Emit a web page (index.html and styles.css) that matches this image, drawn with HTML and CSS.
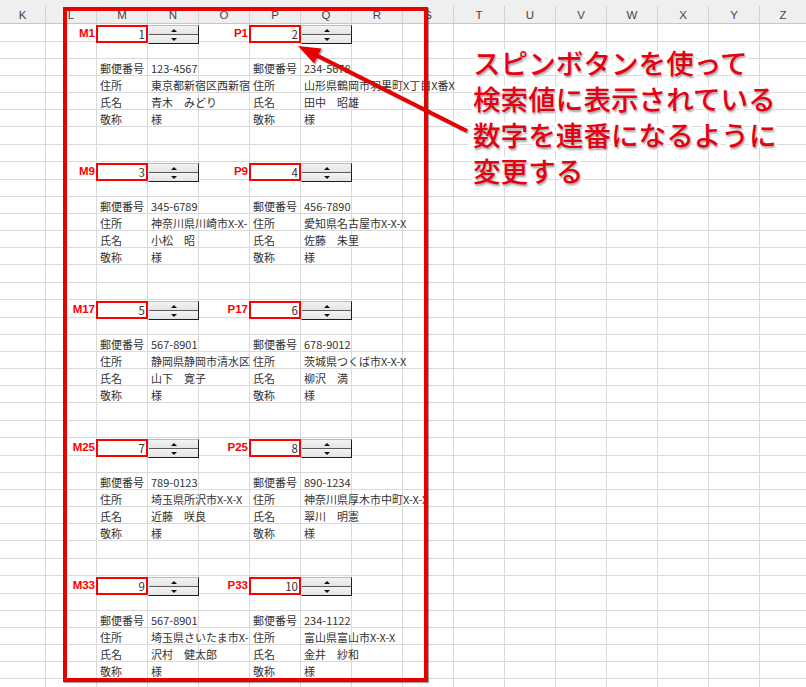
FILE: index.html
```html
<!DOCTYPE html>
<html lang="ja">
<head>
<meta charset="utf-8">
<title>スピンボタン</title>
<link rel="stylesheet" href="styles.css">
</head>
<body>
<div class="sheet">
  <div class="colhead">
    <div class="ch">K</div><div class="ch">L</div><div class="ch">M</div><div class="ch">N</div>
    <div class="ch">O</div><div class="ch">P</div><div class="ch">Q</div><div class="ch">R</div>
    <div class="ch">S</div><div class="ch">T</div><div class="ch">U</div><div class="ch">V</div>
    <div class="ch">W</div><div class="ch">X</div><div class="ch">Y</div><div class="ch">Z</div>
  </div>
  <div class="rows">
    <div class="block">
      <div class="key key-l">M1</div>
      <div class="box box-l">1</div>
      <div class="spin spin-l"><span class="half"><i class="up"></i></span><span class="half"><i class="dn"></i></span></div>
      <div class="key key-r">P1</div>
      <div class="box box-r">2</div>
      <div class="spin spin-r"><span class="half"><i class="up"></i></span><span class="half"><i class="dn"></i></span></div>
      <div class="lbl lbl-l r3">郵便番号</div><div class="val val-l r3">123-4567</div>
      <div class="lbl lbl-l r4">住所</div><div class="val val-l r4">東京都新宿区西新宿</div>
      <div class="lbl lbl-l r5">氏名</div><div class="val val-l r5">青木　みどり</div>
      <div class="lbl lbl-l r6">敬称</div><div class="val val-l r6">様</div>
      <div class="lbl lbl-r r3">郵便番号</div><div class="val val-r r3">234-5678</div>
      <div class="lbl lbl-r r4">住所</div><div class="val val-r r4">山形県鶴岡市羽黒町X丁目X番X</div>
      <div class="lbl lbl-r r5">氏名</div><div class="val val-r r5">田中　昭雄</div>
      <div class="lbl lbl-r r6">敬称</div><div class="val val-r r6">様</div>
    </div>
    <div class="block">
      <div class="key key-l">M9</div>
      <div class="box box-l">3</div>
      <div class="spin spin-l"><span class="half"><i class="up"></i></span><span class="half"><i class="dn"></i></span></div>
      <div class="key key-r">P9</div>
      <div class="box box-r">4</div>
      <div class="spin spin-r"><span class="half"><i class="up"></i></span><span class="half"><i class="dn"></i></span></div>
      <div class="lbl lbl-l r3">郵便番号</div><div class="val val-l r3">345-6789</div>
      <div class="lbl lbl-l r4">住所</div><div class="val val-l r4">神奈川県川崎市X-X-</div>
      <div class="lbl lbl-l r5">氏名</div><div class="val val-l r5">小松　昭</div>
      <div class="lbl lbl-l r6">敬称</div><div class="val val-l r6">様</div>
      <div class="lbl lbl-r r3">郵便番号</div><div class="val val-r r3">456-7890</div>
      <div class="lbl lbl-r r4">住所</div><div class="val val-r r4">愛知県名古屋市X-X-X</div>
      <div class="lbl lbl-r r5">氏名</div><div class="val val-r r5">佐藤　朱里</div>
      <div class="lbl lbl-r r6">敬称</div><div class="val val-r r6">様</div>
    </div>
    <div class="block">
      <div class="key key-l">M17</div>
      <div class="box box-l">5</div>
      <div class="spin spin-l"><span class="half"><i class="up"></i></span><span class="half"><i class="dn"></i></span></div>
      <div class="key key-r">P17</div>
      <div class="box box-r">6</div>
      <div class="spin spin-r"><span class="half"><i class="up"></i></span><span class="half"><i class="dn"></i></span></div>
      <div class="lbl lbl-l r3">郵便番号</div><div class="val val-l r3">567-8901</div>
      <div class="lbl lbl-l r4">住所</div><div class="val val-l r4">静岡県静岡市清水区</div>
      <div class="lbl lbl-l r5">氏名</div><div class="val val-l r5">山下　寛子</div>
      <div class="lbl lbl-l r6">敬称</div><div class="val val-l r6">様</div>
      <div class="lbl lbl-r r3">郵便番号</div><div class="val val-r r3">678-9012</div>
      <div class="lbl lbl-r r4">住所</div><div class="val val-r r4">茨城県つくば市X-X-X</div>
      <div class="lbl lbl-r r5">氏名</div><div class="val val-r r5">柳沢　満</div>
      <div class="lbl lbl-r r6">敬称</div><div class="val val-r r6">様</div>
    </div>
    <div class="block">
      <div class="key key-l">M25</div>
      <div class="box box-l">7</div>
      <div class="spin spin-l"><span class="half"><i class="up"></i></span><span class="half"><i class="dn"></i></span></div>
      <div class="key key-r">P25</div>
      <div class="box box-r">8</div>
      <div class="spin spin-r"><span class="half"><i class="up"></i></span><span class="half"><i class="dn"></i></span></div>
      <div class="lbl lbl-l r3">郵便番号</div><div class="val val-l r3">789-0123</div>
      <div class="lbl lbl-l r4">住所</div><div class="val val-l r4">埼玉県所沢市X-X-X</div>
      <div class="lbl lbl-l r5">氏名</div><div class="val val-l r5">近藤　咲良</div>
      <div class="lbl lbl-l r6">敬称</div><div class="val val-l r6">様</div>
      <div class="lbl lbl-r r3">郵便番号</div><div class="val val-r r3">890-1234</div>
      <div class="lbl lbl-r r4">住所</div><div class="val val-r r4">神奈川県厚木市中町X-X-X</div>
      <div class="lbl lbl-r r5">氏名</div><div class="val val-r r5">翠川　明憲</div>
      <div class="lbl lbl-r r6">敬称</div><div class="val val-r r6">様</div>
    </div>
    <div class="block">
      <div class="key key-l">M33</div>
      <div class="box box-l">9</div>
      <div class="spin spin-l"><span class="half"><i class="up"></i></span><span class="half"><i class="dn"></i></span></div>
      <div class="key key-r">P33</div>
      <div class="box box-r">10</div>
      <div class="spin spin-r"><span class="half"><i class="up"></i></span><span class="half"><i class="dn"></i></span></div>
      <div class="lbl lbl-l r3">郵便番号</div><div class="val val-l r3">567-8901</div>
      <div class="lbl lbl-l r4">住所</div><div class="val val-l r4">埼玉県さいたま市X-</div>
      <div class="lbl lbl-l r5">氏名</div><div class="val val-l r5">沢村　健太郎</div>
      <div class="lbl lbl-l r6">敬称</div><div class="val val-l r6">様</div>
      <div class="lbl lbl-r r3">郵便番号</div><div class="val val-r r3">234-1122</div>
      <div class="lbl lbl-r r4">住所</div><div class="val val-r r4">富山県富山市X-X-X</div>
      <div class="lbl lbl-r r5">氏名</div><div class="val val-r r5">金井　紗和</div>
      <div class="lbl lbl-r r6">敬称</div><div class="val val-r r6">様</div>
    </div>
  </div>

  <div class="frame"></div>

  <svg class="arrow" width="806" height="687" viewBox="0 0 806 687">
    <g class="arrow-shadow" transform="translate(1.5 1.5)">
      <line x1="467" y1="131" x2="316" y2="55" stroke-width="4"/>
      <polygon points="298,46 321.5,48.5 314,63.5"/>
    </g>
    <g class="arrow-main">
      <line x1="467" y1="131" x2="316" y2="55" stroke-width="4"/>
      <polygon points="298,46 321.5,48.5 314,63.5"/>
    </g>
  </svg>

  <div class="note">
    <div>スピンボタンを使って</div>
    <div>検索値に表示されている</div>
    <div>数字を連番になるように</div>
    <div>変更する</div>
  </div>
</div>
</body>
</html>
```

FILE: styles.css
```css
html, body {
  margin: 0;
  padding: 0;
  background: #fff;
}

.sheet {
  position: relative;
  width: 806px;
  height: 687px;
  overflow: hidden;
  font-family: "Noto Sans CJK JP", "Noto Sans", sans-serif;
  font-size: 11px;
  color: #333;
}

.colhead {
  display: grid;
  grid-template-columns: 46px repeat(14, 51px) 46px;
  height: 24px;
  background: #efefef;
  border-bottom: 1px solid #c6c6c6;
  box-sizing: border-box;
}

.ch {
  border-right: 1px solid #d2d2d2;
  text-align: center;
  font-family: "Liberation Sans", Arial, sans-serif;
  font-size: 11.5px;
  color: #444;
  box-sizing: border-box;
  margin-top: 6px;
  line-height: 16px;
  padding-top: 1px;
}

.ch:last-child {
  border-right: 0;
}

.rows {
  display: flex;
  flex-direction: column;
  background-image: linear-gradient(to right, transparent 50px, #dadada 50px);
  background-size: 51px 100%;
  background-position: 46px 0;
  background-repeat: repeat-x;
}

.block {
  display: grid;
  grid-template-columns: 46px repeat(14, 51px) 46px;
  grid-template-rows: 18px 17px 17px 17px 17px 17px 18px 17px;
  background-image: linear-gradient(to bottom,
    transparent 17px, #dadada 17px 18px,
    transparent 18px 34px, #dadada 34px 35px,
    transparent 35px 51px, #dadada 51px 52px,
    transparent 52px 68px, #dadada 68px 69px,
    transparent 69px 85px, #dadada 85px 86px,
    transparent 86px 102px, #dadada 102px 103px,
    transparent 103px 120px, #dadada 120px 121px,
    transparent 121px 137px, #dadada 137px);
}

.key {
  grid-row: 1;
  text-align: right;
  padding-right: 2px;
  font-family: "Liberation Sans", Arial, sans-serif;
  font-weight: bold;
  font-size: 11.5px;
  line-height: 18px;
  color: #ff0000;
}

.key-l { grid-column: 2; }
.key-r { grid-column: 5; }

.box {
  grid-row: 1;
  border: 2px solid #ff0000;
  margin: 1px 0 -1px -1px;
  text-align: right;
  padding-right: 1px;
  line-height: 14px;
  font-size: 11.5px;
  color: #333;
}

.box-l { grid-column: 3; }
.box-r { grid-column: 6; }

.spin {
  grid-row: 1;
  display: flex;
  flex-direction: column;
  margin: 1px 0 -2px 0;
  border-right: 1px solid #1e1e1e;
  border-bottom: 1px solid #1e1e1e;
  border-top: 1px solid #bdbdbd;
  border-left: 1px solid #e8e8e8;
}

.spin-l { grid-column: 4; }
.spin-r { grid-column: 7; }

.half {
  flex: 1;
  display: flex;
  align-items: center;
  justify-content: center;
  background: linear-gradient(#f3f3f3, #e4e4e4);
}

.half:first-child {
  border-bottom: 1px solid #5a5a5a;
}

.up, .dn {
  display: block;
  width: 0;
  height: 0;
  border-left: 3px solid transparent;
  border-right: 3px solid transparent;
}

.up { border-bottom: 3px solid #111; }
.dn { border-top: 3px solid #111; }

.lbl, .val {
  padding-left: 3px;
  line-height: 17px;
  padding-top: 1px;
  white-space: nowrap;
  box-sizing: border-box;
}

.r3 { grid-row: 3; }
.r4 { grid-row: 4; }
.r5 { grid-row: 5; }
.r6 { grid-row: 6; }

.lbl-l { grid-column: 3; }
.lbl-r { grid-column: 6; }

.val-l {
  grid-column: 4 / span 2;
  overflow: hidden;
}

.val-r {
  grid-column: 7 / -1;
}

.frame {
  position: absolute;
  left: 63px;
  top: 7px;
  width: 365px;
  height: 675px;
  box-sizing: border-box;
  border: 4px solid #e60000;
  box-shadow: 1px 1px 1px rgba(0, 0, 0, 0.35);
}

.arrow {
  position: absolute;
  left: 0;
  top: 0;
  pointer-events: none;
}

.arrow-shadow line { stroke: rgba(0, 0, 0, 0.3); }
.arrow-shadow polygon { fill: rgba(0, 0, 0, 0.3); }
.arrow-main line { stroke: #e60000; }
.arrow-main polygon { fill: #e60000; }

.note {
  position: absolute;
  left: 473px;
  top: 44px;
  font-family: "Noto Sans CJK JP", sans-serif;
  font-weight: 500;
  font-size: 27.6px;
  line-height: 36px;
  color: #e60012;
  white-space: nowrap;
  -webkit-text-stroke: 6px #fff;
  paint-order: stroke fill;
  text-shadow: 1px 2px 2px rgba(0, 0, 0, 0.35);
}
```
